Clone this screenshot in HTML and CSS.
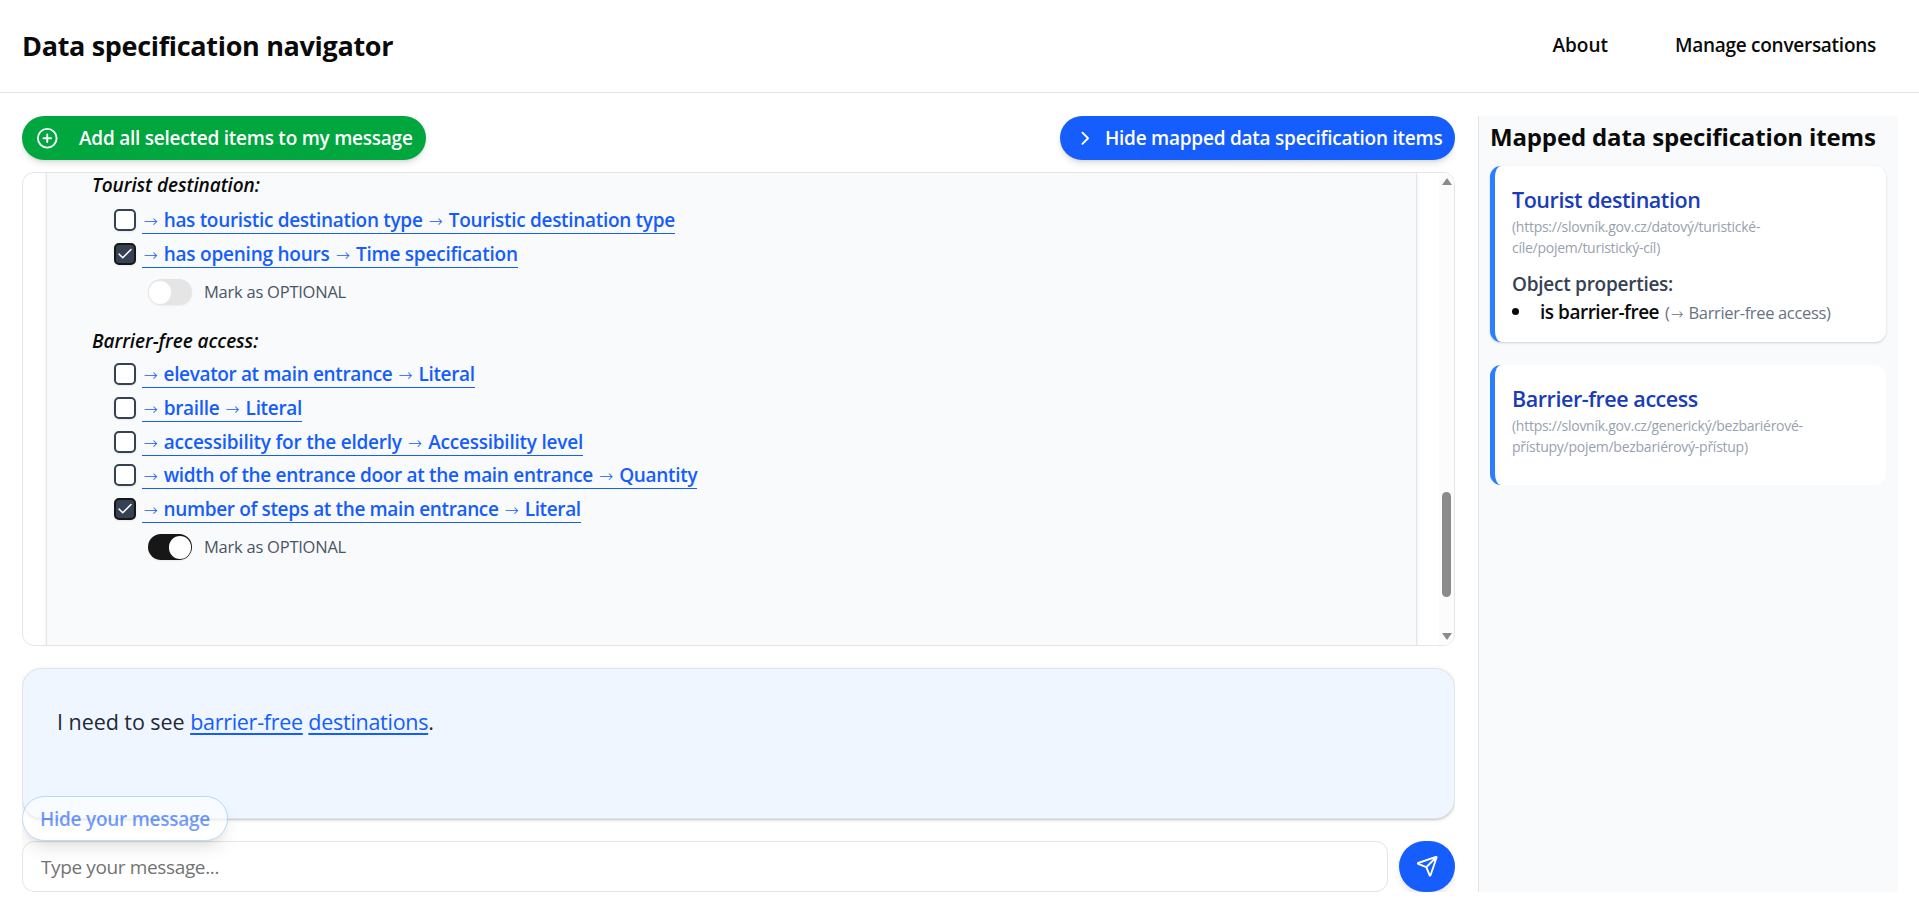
FILE: index.html
```html
<!DOCTYPE html>
<html lang="en">
<head>
<meta charset="utf-8">
<title>Data specification navigator</title>
<link rel="stylesheet" href="styles.css">
</head>
<body>
<header class="topbar">
  <h1 class="brand">Data specification navigator</h1>
  <nav class="nav"><a class="nav-about">About</a><a class="nav-manage">Manage conversations</a></nav>
</header>
<main class="layout">
  <section class="chat">
    <div class="actions">
      <button class="btn btn-add">
        <svg class="icon-plus" viewBox="0 0 24 24"><circle cx="12" cy="12" r="10"/><path d="M8 12h8M12 8v8"/></svg>
        <span>Add all selected items to my message</span>
      </button>
      <button class="btn btn-hide">
        <svg class="icon-chevron" viewBox="0 0 24 24"><path d="m9 18 6-6-6-6"/></svg>
        <span>Hide mapped data specification items</span>
      </button>
    </div>
    <div class="thread">
      <div class="answer">
        <h3 class="group-title">Tourist destination:</h3>
        <ul class="options first">
          <li class="option"><span class="check"></span><a class="link"><i class="arrow">→</i> has touristic destination type <i class="arrow">→</i> Touristic destination type</a></li>
          <li class="option"><span class="check checked"><svg viewBox="0 0 24 24"><path d="M20 6 9 17l-5-5"/></svg></span><a class="link loose"><i class="arrow">→</i> has opening hours <i class="arrow">→</i> Time specification</a></li>
        </ul>
        <div class="optional"><span class="switch"><span class="knob"></span></span><span class="optional-label">Mark as OPTIONAL</span></div>
        <h3 class="group-title second">Barrier-free access:</h3>
        <ul class="options">
          <li class="option"><span class="check"></span><a class="link tight"><i class="arrow">→</i> elevator at main entrance <i class="arrow">→</i> Literal</a></li>
          <li class="option"><span class="check"></span><a class="link"><i class="arrow">→</i> braille <i class="arrow">→</i> Literal</a></li>
          <li class="option"><span class="check"></span><a class="link loose"><i class="arrow">→</i> accessibility for the elderly <i class="arrow">→</i> Accessibility level</a></li>
          <li class="option"><span class="check"></span><a class="link"><i class="arrow">→</i> width of the entrance door at the main entrance <i class="arrow">→</i> Quantity</a></li>
          <li class="option"><span class="check checked"><svg viewBox="0 0 24 24"><path d="M20 6 9 17l-5-5"/></svg></span><a class="link tight"><i class="arrow">→</i> number of steps at the main entrance <i class="arrow">→</i> Literal</a></li>
        </ul>
        <div class="optional"><span class="switch on"><span class="knob"></span></span><span class="optional-label">Mark as OPTIONAL</span></div>
      </div>
      <div class="scrollbar"><span class="arrow-up"></span><span class="thumb"></span><span class="arrow-down"></span></div>
    </div>
    <div class="message">
      <p class="message-text">I need to see <a class="mapped">barrier-free</a> <a class="mapped">destinations</a>.</p>
      <button class="toggle-message">Hide your message</button>
    </div>
    <div class="composer">
      <div class="input">Type your message...</div>
      <button class="send"><svg viewBox="0 0 24 24"><path d="M14.536 21.686a.5.5 0 0 0 .937-.024l6.5-19a.496.496 0 0 0-.635-.635l-19 6.5a.5.5 0 0 0-.024.937l7.93 3.18a2 2 0 0 1 1.112 1.11zM21.854 2.147l-10.94 10.939"/></svg></button>
    </div>
  </section>
  <aside class="mapped-items">
    <h2 class="aside-title">Mapped data specification items</h2>
    <article class="card">
      <h3 class="card-title">Tourist destination</h3>
      <p class="iri">(https://slovník.gov.cz/datový/turistické-<br>cíle/pojem/turistický-cíl)</p>
      <h4 class="props-title">Object properties:</h4>
      <p class="prop"><span class="bullet"></span><span class="prop-name">is barrier-free</span><span class="prop-range">(<i class="arrow small">→</i> Barrier-free access)</span></p>
    </article>
    <article class="card card-b">
      <h3 class="card-title">Barrier-free access</h3>
      <p class="iri">(https://slovník.gov.cz/generický/bezbariérové-<br>přístupy/pojem/bezbariérový-přístup)</p>
    </article>
  </aside>
</main>
</body>
</html>
```
FILE: styles.css
```css
* { box-sizing: border-box; margin: 0; padding: 0; }
body { height: 910px; overflow: hidden; background: #fff; color: #0a0a0a; font-family: "Open Sans", "Noto Sans", sans-serif; font-size: 19px; }
button { border: 0; font: inherit; color: inherit; }
svg { fill: none; stroke: currentColor; stroke-width: 2; stroke-linecap: round; stroke-linejoin: round; flex: none; display: block; }
ul { list-style: none; }

.topbar { height: 93px; border-bottom: 1px solid #e5e5e5; display: flex; justify-content: space-between; padding: 0 43px 0 22px; }
.brand { font-size: 27px; font-weight: 700; line-height: 91px; letter-spacing: -.32px; white-space: nowrap; }
.nav { display: flex; gap: 67px; line-height: 90px; font-weight: 600; white-space: nowrap; }
.nav-manage { letter-spacing: -.27px; }

.layout { display: grid; grid-template-columns: 1433px 420px; column-gap: 23px; padding: 23px 0 0 22px; }
.chat { height: 776px; display: flex; flex-direction: column; overflow: hidden; }
.actions { display: flex; justify-content: space-between; }
.btn { height: 44px; border-radius: 22px; color: #fff; font-weight: 600; display: flex; align-items: center; white-space: nowrap; line-height: 44px; letter-spacing: -.24px; box-shadow: 0 4px 7px -1px rgba(0,0,0,.12), 0 2px 4px -2px rgba(0,0,0,.12); }
.btn-add { width: 404px; padding-left: 14px; background: #00a63e; }
.btn-hide { width: 395px; padding-left: 14px; background: #155dfc; }
.icon-plus { width: 22.5px; height: 22.5px; margin-right: 20.5px; }
.icon-chevron { width: 22.5px; height: 22.5px; margin-right: 8.5px; }

.thread { height: 474px; margin-top: 12px; border: 1px solid #e5e5e5; border-radius: 12px; overflow: hidden; display: flex; justify-content: space-between; padding-left: 23px; }
.answer { width: 1371px; background: #f9fafb; border: solid #e5e5e5; border-width: 0 1px; padding-left: 45px; box-shadow: 0 1px 3px rgba(0,0,0,.1); }
.group-title { font-size: 19px; font-style: italic; font-weight: 600; line-height: 25px; letter-spacing: -.07px; }
.group-title.second { margin-top: 24px; }
.options { margin: 4px 0 0 22px; }
.options.first { margin-top: 6px; }
.option { display: flex; height: 33.75px; align-items: flex-start; padding-top: 3px; }
.check { width: 22px; height: 22px; border: 2px solid #364153; border-radius: 5px; background: #fff; box-shadow: 0 1px 2px rgba(0,0,0,.08); flex: none; margin: 2px 6px 0 0; }
.check.checked { background: #364153; border-color: #171717; color: #fff; }
.check svg { width: 18px; height: 18px; }
.link { color: #155dfc; font-weight: 600; line-height: 26px; height: 27px; border-bottom: 1px solid #155dfc; letter-spacing: -.31px; white-space: nowrap; }
.link.tight { letter-spacing: -.36px; }
.link.loose { letter-spacing: -.23px; }
.arrow { display: inline-block; width: 17px; font-family: "Noto Sans", "DejaVu Sans", sans-serif; font-size: 17px; font-style: normal; font-weight: 300; text-align: center; letter-spacing: 0; }
.optional { display: flex; align-items: center; height: 26px; margin: 7.5px 0 0 56px; }
.switch { width: 44px; height: 26px; border-radius: 13px; background: #e5e5e5; padding: 1px; box-shadow: 0 1px 2px rgba(0,0,0,.06); display: flex; align-items: center; }
.switch.on { background: #171717; justify-content: flex-end; }
.knob { width: 22px; height: 23px; border-radius: 12px; background: #fff; }
.optional-label { margin-left: 12px; font-size: 16.5px; letter-spacing: -.24px; color: #4a5565; line-height: 26px; }

.scrollbar { width: 15px; background: #fcfcfc; display: flex; flex-direction: column; align-items: center; padding: 5px 3px; }
.arrow-up { border: solid transparent; border-width: 0 5px 7px; border-bottom-color: #8b8b8b; }
.thumb { width: 9px; height: 106px; border-radius: 5px; background: #8b8b8b; margin: 307px 0 36px; }
.arrow-down { border: solid transparent; border-width: 7px 5px 0; border-top-color: #8b8b8b; }

.message { position: relative; height: 151px; margin-top: 22px; border: 1px solid #e2e4e7; border-radius: 20px; background: #eff6ff; box-shadow: 0 1px 4px rgba(0,0,0,.12), 0 2px 2px -1px rgba(0,0,0,.14); padding: 35px 34px; }
.message-text { font-size: 21.5px; line-height: 36px; color: #1e2939; white-space: pre; letter-spacing: -.05px; }
.mapped { color: #155dfc; letter-spacing: -.28px; text-decoration: underline; text-decoration-thickness: 2px; text-underline-offset: 3px; }
.toggle-message { position: absolute; left: -1px; top: 127px; width: 206px; height: 45px; border: 1px solid #8ec5ff; border-radius: 23px; background: #fff; color: #155dfc; opacity: .6; font-weight: 600; line-height: 42px; letter-spacing: -.25px; box-shadow: 0 10px 16px -3px rgba(0,0,0,.16), 0 4px 6px -4px rgba(0,0,0,.16); white-space: nowrap; z-index: 1; }

.composer { display: flex; gap: 11px; margin-top: 22px; height: 51px; }
.input { width: 1366px; border: 1px solid #e5e5e5; border-radius: 12px; color: #737373; line-height: 50px; padding-left: 18px; letter-spacing: -.37px; }
.send { width: 56px; height: 51px; border-radius: 26px; background: #155dfc; color: #fff; display: flex; align-items: center; justify-content: center; box-shadow: 0 4px 7px -1px rgba(0,0,0,.12); }
.send svg { width: 22.5px; height: 22.5px; }

.mapped-items { height: 776px; background: #f9fafb; border-left: 1px solid #e5e5e5; padding: 3px 12px 0 11px; }
.aside-title { font-size: 24px; font-weight: 700; line-height: 36px; letter-spacing: -.15px; white-space: nowrap; }
.card { margin-top: 11px; height: 176px; background: #fff; border-left: 5px solid #2b7fff; border-radius: 11px; padding: 19px 0 0 17px; box-shadow: 0 1px 3px rgba(0,0,0,.1), 0 1px 2px rgba(0,0,0,.08); }
.card-b { margin-top: 23px; height: 120px; box-shadow: none; }
.card-title { font-size: 21.5px; font-weight: 600; line-height: 30px; letter-spacing: -.45px; color: #193cb8; }
.iri { margin-top: 1px; font-size: 14px; line-height: 21px; letter-spacing: -.26px; color: #99a1af; white-space: nowrap; }
.props-title { margin-top: 12px; font-size: 19px; font-weight: 600; line-height: 28px; letter-spacing: -.26px; color: #364153; }
.prop { display: flex; align-items: baseline; line-height: 28px; white-space: nowrap; }
.bullet { width: 7px; height: 7px; border-radius: 50%; background: #0a0a0a; margin-right: 21px; transform: translateY(-4px); }
.prop-name { font-weight: 600; letter-spacing: -.48px; }
.prop-range { margin-left: 6px; font-size: 16.5px; letter-spacing: -.34px; color: #6a7282; }
.arrow.small { width: 15px; font-size: 15px; }
```
